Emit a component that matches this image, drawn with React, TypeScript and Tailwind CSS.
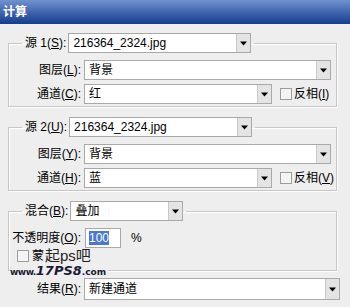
import React from "react";

const font = "font-['Liberation_Sans','Noto_Sans_CJK_SC',sans-serif]";

function Arrow() {
  return (
    <svg width="7" height="5" viewBox="0 0 7 5">
      <path d="M0 0.5h7L3.5 4.5z" fill="#000" />
    </svg>
  );
}

function Select({ value, className }: { value: string; className: string }) {
  return (
    <div className={`flex h-[20px] border border-[#a9a9a9] bg-white ${className}`}>
      <div className="flex flex-1 items-center pl-[4px] text-[12px] leading-[14px] text-black">
        {value}
      </div>
      <div className="flex w-[14px] items-center justify-center border-l border-[#c9c9c9] bg-[#e4e4e4]">
        <Arrow />
      </div>
    </div>
  );
}

function Label({ text, k, className }: { text: string; k: string; className?: string }) {
  return (
    <span className={`text-[12px] leading-[14px] text-black whitespace-nowrap ${className ?? ""}`}>
      {text}(<u className="underline-offset-1">{k}</u>):
    </span>
  );
}

function Check({ text, k }: { text: string; k: string }) {
  return (
    <div className="ml-[8px] flex items-center">
      <span className="h-[12px] w-[12px] border border-[#9c9c9c] bg-[#f4f4f4]" />
      <span className="ml-[2px] text-[12px] leading-[14px] text-black whitespace-nowrap">
        {text}(<u>{k}</u>)
      </span>
    </div>
  );
}

function SourceGroup({
  n,
  k1,
  k2,
  k3,
  k4,
  channel,
  className,
}: {
  n: string;
  k1: string;
  k2: string;
  k3: string;
  k4: string;
  channel: string;
  className: string;
}) {
  return (
    <fieldset
      className={`ml-[8px] mr-[13px] border border-[#c6c6c6] pb-[2px] shadow-[inset_1px_1px_0_#fff,1px_1px_0_#fff] ${className}`}
    >
      <legend className="ml-[13px] flex items-center px-[3px]">
        <Label text={`源 ${n}`} k={k1} />
        <Select value="216364_2324.jpg" className="ml-[2px] w-[183px]" />
      </legend>
      <div className="mt-[7px] flex items-center">
        <Label text="图层" k={k2} className="w-[72px] text-right" />
        <Select value="背景" className="ml-[3px] w-[247px]" />
      </div>
      <div className="mt-[4px] flex items-center">
        <Label text="通道" k={k3} className="w-[72px] text-right" />
        <Select value={channel} className="ml-[3px] w-[188px]" />
        <Check text="反相" k={k4} />
      </div>
    </fieldset>
  );
}

export default function App() {
  return (
    <div className={`relative h-[307px] w-[350px] overflow-hidden bg-[#eeeeee] ${font}`}>
      <div className="flex h-[24px] items-center bg-linear-to-b from-[#7291cf] to-[#143b8e] px-[3px] text-[12px] font-bold text-white">
        计算
      </div>

      <SourceGroup n="1" k1="S" k2="L" k3="C" k4="I" channel="红" className="mt-[9px]" />
      <SourceGroup n="2" k1="U" k2="Y" k3="H" k4="V" channel="蓝" className="mt-[10px]" />

      <fieldset className="ml-[8px] mr-[13px] mt-[10px] border border-[#c6c6c6] pb-[7px] shadow-[inset_1px_1px_0_#fff,1px_1px_0_#fff]">
        <legend className="ml-[13px] flex items-center px-[3px]">
          <Label text="混合" k="B" />
          <Select value="叠加" className="ml-[2px] w-[113px]" />
        </legend>
        <div className="mt-[7px] flex items-center">
          <Label text="不透明度" k="O" className="w-[72px] text-right" />
          <div className="ml-[4px] flex h-[20px] w-[36px] items-center border border-[#a9a9a9] bg-white pl-[3px]">
            <span className="bg-[#4a78d2] text-[12px] leading-[14px] text-white">100</span>
          </div>
          <span className="ml-[10px] text-[12px] leading-[14px] text-black">%</span>
        </div>
        <div className="mt-[1px] flex h-[14px] items-center pl-[8px]">
          <span className="h-[12px] w-[12px] border border-[#9c9c9c] bg-[#f4f4f4]" />
          <span className="ml-[3px] text-[12px] leading-[12px] text-black">蒙</span>
          <span className="ml-[1px] text-[15px] leading-[12px] text-[#222]">起ps吧</span>
        </div>
      </fieldset>

      <div className="mt-[7px] flex items-center">
        <Label text="结果" k="R" className="w-[81px] text-right" />
        <Select value="新建通道" className="ml-[3px] h-[22px] w-[256px]" />
      </div>

      <div className="absolute left-[10px] top-[264px] flex items-end bg-[#eeeeee] pr-[2px] font-['DejaVu_Sans',sans-serif] font-bold leading-none text-[#1b1b36]">
        <span className="text-[9px] tracking-[-0.5px]">www.</span>
        <span className="text-[13px] italic">17PS8</span>
        <span className="text-[9px]">.com</span>
      </div>
    </div>
  );
}
